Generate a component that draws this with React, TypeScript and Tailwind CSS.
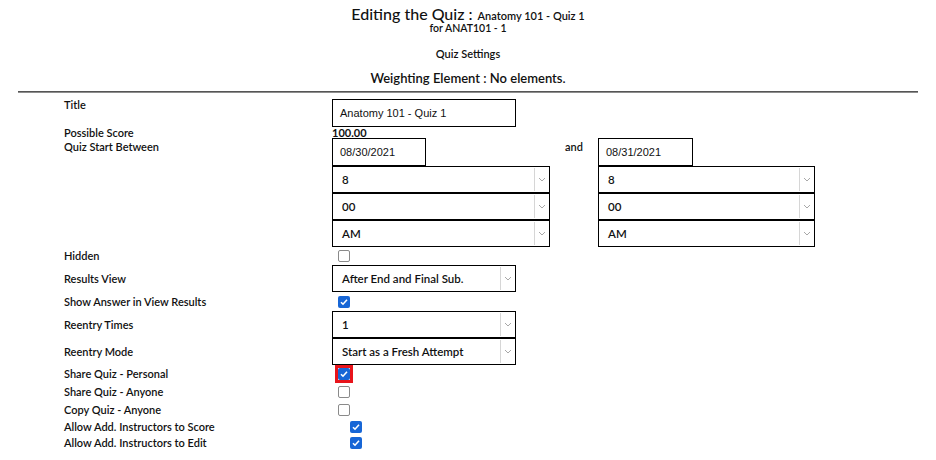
const font = "font-['Lato','Noto_Sans',sans-serif]";

const Chevron = () => (
  <svg width="8" height="5" viewBox="0 0 8 5" className="text-[#a8a8a8]">
    <path d="M1 1l3 3 3-3" fill="none" stroke="currentColor" strokeWidth="1" />
  </svg>
);

const Select = ({ value, w }: { value: string; w: string }) => (
  <div className={`flex h-[27px] items-stretch border border-black bg-white ${w}`}>
    <div className="flex flex-1 items-center pl-[9px] text-[11.5px] font-semibold text-[#111]">{value}</div>
    <div className="my-[1px] flex w-[15px] items-center justify-center border-l border-[#d6d6d6]">
      <Chevron />
    </div>
  </div>
);

const TextInput = ({ value, w }: { value: string; w: string }) => (
  <div
    className={`flex h-[28px] items-center border border-black bg-white pl-[7px] font-['Liberation_Sans',Arial,sans-serif] text-[11px] text-[#111] ${w}`}
  >
    {value}
  </div>
);

const Check = ({ checked, focus }: { checked?: boolean; focus?: boolean }) => (
  <div className={`flex h-[18px] w-[18px] items-center justify-center ${focus ? "border-[3px] border-[#e8141b]" : ""}`}>
    {checked ? (
      <div className="flex h-[12px] w-[12px] items-center justify-center rounded-[2px] bg-[#1766d6]">
        <svg width="10" height="10" viewBox="0 0 10 10">
          <path d="M2 5.2l2 2 4-4.4" fill="none" stroke="white" strokeWidth="1.6" />
        </svg>
      </div>
    ) : (
      <div className="h-[12px] w-[12px] rounded-[2px] border border-[#8a8a8a] bg-white" />
    )}
  </div>
);

const Label = ({ children, top }: { children: string; top?: boolean }) => (
  <div className={`flex h-full text-[11px] font-semibold leading-[12px] text-[#111] ${top ? "items-start" : "items-center"}`}>
    {children}
  </div>
);

export default function App() {
  return (
    <div className={`h-[460px] w-[936px] overflow-hidden bg-white ${font} text-[#111]`}>
      <div className="flex flex-col items-center pt-[4px]">
        <div className="flex h-[20px] items-baseline gap-[5px] leading-[20px]">
          <span className="text-[16px] font-medium">Editing the Quiz :</span>
          <span className="text-[11px] font-semibold">Anatomy 101 - Quiz 1</span>
        </div>
        <div className="-mt-[2px] h-[12px] text-[10.5px] font-semibold leading-[12px]">for ANAT101 - 1</div>
        <div className="mt-[14px] h-[12px] text-[11px] font-semibold leading-[12px]">Quiz Settings</div>
        <div className="mt-[11px] h-[14px] text-[13px] font-semibold leading-[14px]">Weighting Element : No elements.</div>
      </div>
      <div className="mx-[18px] mt-[6px] h-[2px] border-t border-[#555] bg-[#8d8d8d]" />

      <div className="grid grid-cols-[268px_1fr] pl-[64px] pt-[6px]">
        <div><Label top>Title</Label></div>
        <div><TextInput value="Anatomy 101 - Quiz 1" w="w-[184px]" /></div>

        <div className="h-[11px]"><Label>Possible Score</Label></div>
        <div className="flex h-[11px] items-center text-[11px] font-bold leading-none">100.00</div>

        <div className="pt-[3px]"><Label top>Quiz Start Between</Label></div>
        <div className="flex">
          <div className="flex flex-col">
            <TextInput value="08/30/2021" w="w-[94px]" />
            <Select value="8" w="w-[218px]" />
            <Select value="00" w="w-[218px]" />
            <Select value="AM" w="w-[218px]" />
          </div>
          <div className="w-[48px] pl-[15px] pt-[3px] text-[11px] font-semibold leading-[12px]">and</div>
          <div className="flex flex-col">
            <TextInput value="08/31/2021" w="w-[95px]" />
            <Select value="8" w="w-[217px]" />
            <Select value="00" w="w-[217px]" />
            <Select value="AM" w="w-[217px]" />
          </div>
        </div>

        <div className="h-[18px]"><Label>Hidden</Label></div>
        <div className="flex h-[18px] items-center pl-[3px]"><Check /></div>

        <div className="h-[27px]"><Label>Results View</Label></div>
        <div className="h-[27px]"><Select value="After End and Final Sub." w="w-[184px]" /></div>

        <div className="h-[19px]"><Label>Show Answer in View Results</Label></div>
        <div className="flex h-[19px] items-center pl-[3px]"><Check checked /></div>

        <div className="h-[27px]"><Label>Reentry Times</Label></div>
        <div className="h-[27px]"><Select value="1" w="w-[184px]" /></div>

        <div className="h-[27px]"><Label>Reentry Mode</Label></div>
        <div className="h-[27px]"><Select value="Start as a Fresh Attempt" w="w-[184px]" /></div>

        <div className="h-[18px]"><Label>Share Quiz - Personal</Label></div>
        <div className="flex h-[18px] items-center pl-[3px]"><Check checked focus /></div>

        <div className="h-[18px]"><Label>Share Quiz - Anyone</Label></div>
        <div className="flex h-[18px] items-center pl-[3px]"><Check /></div>

        <div className="h-[18px]"><Label>Copy Quiz - Anyone</Label></div>
        <div className="flex h-[18px] items-center pl-[3px]"><Check /></div>

        <div className="h-[16px]"><Label>Allow Add. Instructors to Score</Label></div>
        <div className="flex h-[16px] items-center pl-[15px]"><Check checked /></div>

        <div className="h-[16px]"><Label>Allow Add. Instructors to Edit</Label></div>
        <div className="flex h-[16px] items-center pl-[15px]"><Check checked /></div>
      </div>
    </div>
  );
}
